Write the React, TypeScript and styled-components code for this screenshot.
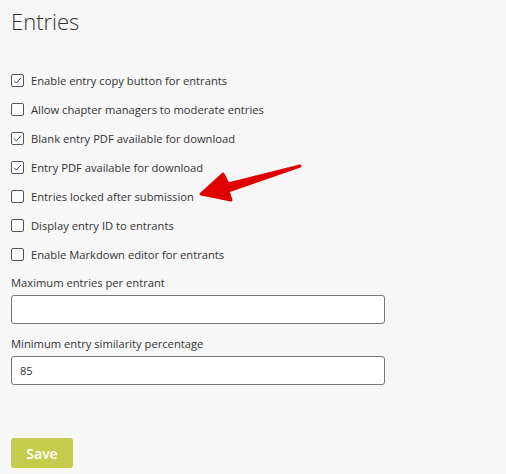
import styled, { createGlobalStyle } from "styled-components";

const GlobalStyle = createGlobalStyle`
  body {
    margin: 0;
    background: #f7f7f7;
    font-family: "Open Sans", "Liberation Sans", sans-serif;
    color: #333;
  }
`;

const options = [
  { label: "Enable entry copy button for entrants", checked: true },
  { label: "Allow chapter managers to moderate entries", checked: false },
  { label: "Blank entry PDF available for download", checked: true },
  { label: "Entry PDF available for download", checked: true },
  { label: "Entries locked after submission", checked: false },
  { label: "Display entry ID to entrants", checked: false },
  { label: "Enable Markdown editor for entrants", checked: false },
];

export default function App() {
  return (
    <Page>
      <GlobalStyle />
      <Title>Entries</Title>
      <CheckList>
        {options.map((o) => (
          <CheckRow key={o.label}>
            <Box>
              {o.checked && (
                <svg width="11" height="11" viewBox="0 0 11 11">
                  <path d="M2 5.6 L4.4 8 L9 2.8" fill="none" stroke="#444" strokeWidth="1" />
                </svg>
              )}
            </Box>
            {o.label}
          </CheckRow>
        ))}
      </CheckList>
      <Field $gap={15}>
        <FieldLabel>Maximum entries per entrant</FieldLabel>
        <Input />
      </Field>
      <Field $gap={13}>
        <FieldLabel>Minimum entry similarity percentage</FieldLabel>
        <Input defaultValue="85" />
      </Field>
      <SaveButton>Save</SaveButton>
      <Arrow width="506" height="474" viewBox="0 0 506 474">
        <path
          d="M300 166 L228 184 L223 174 L201 194 L231 200 L228 191 Z"
          fill="#e00000"
          stroke="#e00000"
          strokeWidth="3"
          strokeLinejoin="round"
        />
      </Arrow>
    </Page>
  );
}

const Page = styled.div`
  position: relative;
  width: 506px;
  height: 474px;
  padding: 8px 11px 0;
  box-sizing: border-box;
`;

const Title = styled.h1`
  margin: 0;
  font-size: 22px;
  font-weight: 300;
  line-height: 26px;
  color: #333;
`;

const CheckList = styled.div`
  display: flex;
  flex-direction: column;
  gap: 16px;
  margin-top: 40px;
`;

const CheckRow = styled.label`
  display: flex;
  align-items: center;
  gap: 7px;
  font-size: 11.2px;
  line-height: 13px;
  color: #333;
`;

const Box = styled.span`
  width: 13px;
  height: 13px;
  box-sizing: border-box;
  border: 1px solid #555;
  border-radius: 2px;
  background: #fff;
  display: flex;
  align-items: center;
  justify-content: center;
`;

const Field = styled.div<{ $gap: number }>`
  display: flex;
  flex-direction: column;
  margin-top: ${(p) => p.$gap}px;
`;

const FieldLabel = styled.div`
  font-size: 11.2px;
  line-height: 14px;
  margin-bottom: 5px;
`;

const Input = styled.input`
  width: 374px;
  height: 29px;
  box-sizing: border-box;
  border: 1px solid #777;
  border-radius: 3px;
  background: #fff;
  padding: 0 8px;
  font-family: inherit;
  font-size: 11px;
  color: #333;
`;

const SaveButton = styled.button`
  display: block;
  margin-top: 53px;
  width: 62px;
  height: 30px;
  border: none;
  border-radius: 3px;
  background: #c3cc4c;
  color: #fff;
  font-family: inherit;
  font-size: 14px;
  font-weight: 600;
`;

const Arrow = styled.svg`
  position: absolute;
  left: 0;
  top: 0;
  pointer-events: none;
`;
